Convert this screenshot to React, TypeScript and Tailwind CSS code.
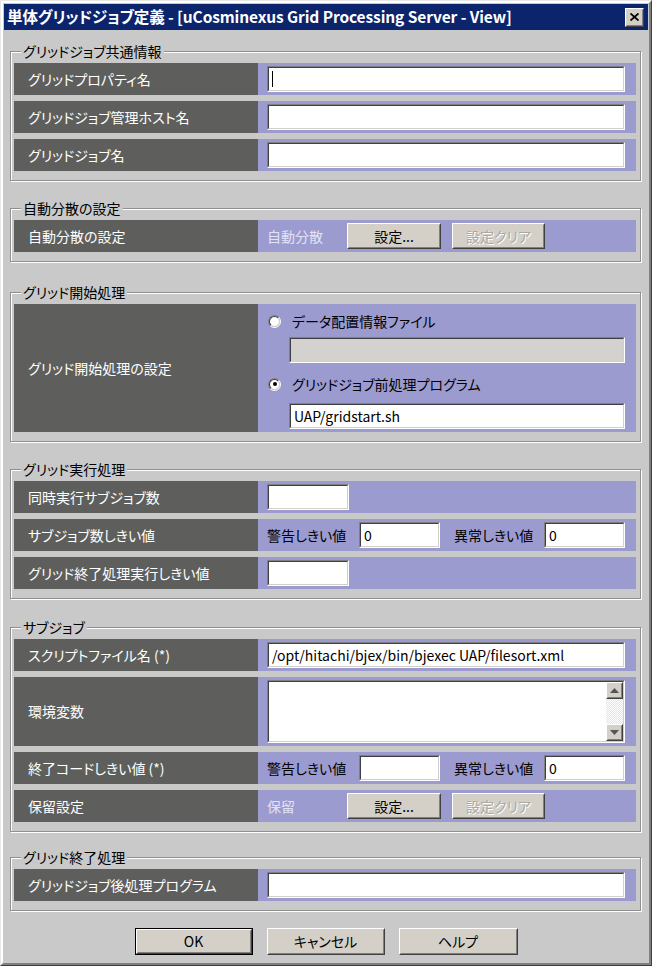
import React from "react"

const JP = "font-['Noto_Sans_CJK_JP',sans-serif] [font-feature-settings:'palt']"

const Sunken = ({
  className = "",
  value = "",
  disabled = false,
  caret = false,
}: {
  className?: string
  value?: string
  disabled?: boolean
  caret?: boolean
}) => (
  <div
    className={`border border-t-[#808080] border-l-[#808080] border-b-white border-r-white ${className}`}
  >
    <div
      className={`flex h-full items-center border border-t-[#404040] border-l-[#404040] border-b-[#d4d0c8] border-r-[#d4d0c8] px-[3px] text-[14px] text-black ${
        disabled ? "bg-[#d4d2ce]" : "bg-white"
      }`}
    >
      {caret && <span className="h-[16px] w-px bg-black" />}
      {value}
    </div>
  </div>
)

const Button = ({
  children,
  className = "",
  disabled = false,
  primary = false,
}: {
  children: React.ReactNode
  className?: string
  disabled?: boolean
  primary?: boolean
}) => (
  <div className={`${primary ? "border border-black" : ""} ${className}`}>
    <div className="h-full border border-t-white border-l-white border-b-[#404040] border-r-[#404040]">
      <div
        className={`flex h-full items-center justify-center border border-t-[#d4d0c8] border-l-[#d4d0c8] border-b-[#808080] border-r-[#808080] bg-[#d4d0c8] text-[14px] ${
          disabled
            ? "text-[#a9a8a5] [text-shadow:1px_1px_0_#ffffff]"
            : "text-black"
        }`}
      >
        {children}
      </div>
    </div>
  </div>
)

const Group = ({
  title,
  children,
  className = "",
}: {
  title: string
  children: React.ReactNode
  className?: string
}) => (
  <fieldset
    className={`ml-[7px] w-[631px] border border-[#8f8f8f] pt-[4px] pr-[4px] pb-[9px] pl-[3px] shadow-[inset_1px_1px_0_#ffffff,1px_1px_0_#ffffff] ${className}`}
  >
    <legend className="ml-[7px] bg-[#c9c9c9] px-[2px] text-[14px] leading-[16px] text-black">
      {title}
    </legend>
    <div className="flex flex-col gap-[6px]">{children}</div>
  </fieldset>
)

const Row = ({
  label,
  children,
  h = "h-[32px]",
}: {
  label: string
  children?: React.ReactNode
  h?: string
}) => (
  <div className={`flex ${h}`}>
    <div className="flex w-[244px] shrink-0 items-center bg-[#5e5f5c] pl-[14px] text-[14px] text-white">
      {label}
    </div>
    <div className="flex flex-1 items-center bg-[#9c9bcf] pl-[9px] pr-[11px]">
      {children}
    </div>
  </div>
)

const Radio = ({ checked = false }: { checked?: boolean }) => (
  <div className="flex h-[13px] w-[13px] items-center justify-center rounded-full border border-t-[#808080] border-l-[#808080] border-b-white border-r-white">
    <div className="flex h-[11px] w-[11px] items-center justify-center rounded-full border border-t-[#404040] border-l-[#404040] border-b-[#d4d0c8] border-r-[#d4d0c8] bg-white">
      {checked && <div className="h-[4px] w-[4px] rounded-full bg-black" />}
    </div>
  </div>
)

const Threshold = ({ warn, err }: { warn: string; err: string }) => (
  <div className="flex w-full items-center">
    <span className="w-[92px] text-[14px] text-black">警告しきい値</span>
    <Sunken className="h-[26px] w-[81px]" value={warn} />
    <span className="ml-[14px] w-[90px] text-[14px] text-black">異常しきい値</span>
    <Sunken className="h-[26px] flex-1" value={err} />
  </div>
)

const SettingButtons = ({ label }: { label: string }) => (
  <div className="flex items-center">
    <span className="w-[80px] text-[14px] text-[#e2e2f6]">{label}</span>
    <Button className="h-[26px] w-[94px]">設定...</Button>
    <Button className="ml-[11px] h-[26px] w-[93px]" disabled>
      設定クリア
    </Button>
  </div>
)

const ScrollArrow = ({ up }: { up?: boolean }) => (
  <Button className="h-[17px] w-[17px]">
    <svg width="9" height="5" viewBox="0 0 9 5">
      {up ? (
        <path d="M4.5 0 L9 5 L0 5 Z" fill="#555" />
      ) : (
        <path d="M0 0 L9 0 L4.5 5 Z" fill="#555" />
      )}
    </svg>
  </Button>
)

export default function App() {
  return (
    <div className={`${JP} w-[652px] bg-white`}>
      <div className="border border-t-[#e8e8e8] border-l-[#e8e8e8] border-b-[#404040] border-r-[#404040]">
        <div className="border-2 border-t-white border-l-white border-b-[#808080] border-r-[#808080] bg-[#c9c9c9] pb-[8px]">
          {/* title bar */}
          <div className="mx-[1px] mt-[1px] flex h-[26px] items-center justify-between bg-[#0b246c] pl-[3px] pr-[4px]">
            <span className="text-[15.5px] font-bold tracking-[-0.1px] text-white">
              単体グリッドジョブ定義 - [uCosminexus Grid Processing Server - View]
            </span>
            <Button className="h-[19px] w-[19px]">
              <svg width="9" height="8" viewBox="0 0 9 8">
                <path
                  d="M0.5 0.5 L8.5 7.5 M8.5 0.5 L0.5 7.5"
                  stroke="#000"
                  strokeWidth="1.8"
                />
              </svg>
            </Button>
          </div>

          <div className="mt-[13px] flex flex-col gap-[19px]">
            <Group title="グリッドジョブ共通情報">
              <Row label="グリッドプロパティ名">
                <Sunken className="h-[26px] w-full" caret />
              </Row>
              <Row label="グリッドジョブ管理ホスト名">
                <Sunken className="h-[26px] w-full" />
              </Row>
              <Row label="グリッドジョブ名">
                <Sunken className="h-[26px] w-full" />
              </Row>
            </Group>

            <Group title="自動分散の設定">
              <Row label="自動分散の設定">
                <SettingButtons label="自動分散" />
              </Row>
            </Group>

            <Group title="グリッド開始処理" className="mt-[3px]">
              <div className="flex h-[128px]">
                <div className="flex w-[244px] shrink-0 items-center bg-[#5e5f5c] pl-[14px] text-[14px] text-white">
                  グリッド開始処理の設定
                </div>
                <div className="flex flex-1 flex-col bg-[#9c9bcf] pt-[8px] pl-[10px] pr-[11px]">
                  <div className="flex h-[18px] items-center gap-[11px] text-[14px] text-black">
                    <Radio />
                    データ配置情報ファイル
                  </div>
                  <Sunken className="ml-[21px] mt-[7px] h-[26px]" disabled />
                  <div className="mt-[12px] flex h-[18px] items-center gap-[11px] text-[14px] text-black">
                    <Radio checked />
                    グリッドジョブ前処理プログラム
                  </div>
                  <Sunken
                    className="ml-[21px] mt-[10px] h-[26px]"
                    value="UAP/gridstart.sh"
                  />
                </div>
              </div>
            </Group>

            <Group title="グリッド実行処理">
              <Row label="同時実行サブジョブ数">
                <Sunken className="h-[26px] w-[82px]" />
              </Row>
              <Row label="サブジョブ数しきい値">
                <Threshold warn="0" err="0" />
              </Row>
              <Row label="グリッド終了処理実行しきい値">
                <Sunken className="h-[26px] w-[82px]" />
              </Row>
            </Group>

            <Group title="サブジョブ" className="mt-[1px]">
              <Row label="スクリプトファイル名 (*)">
                <Sunken
                  className="h-[26px] w-full"
                  value="/opt/hitachi/bjex/bin/bjexec UAP/filesort.xml"
                />
              </Row>
              <Row label="環境変数" h="h-[69px]">
                <div className="h-[63px] w-full border border-t-[#808080] border-l-[#808080] border-b-white border-r-white">
                  <div className="flex h-full border border-t-[#404040] border-l-[#404040] border-b-[#d4d0c8] border-r-[#d4d0c8] bg-white">
                    <div className="flex-1" />
                    <div className="flex w-[17px] flex-col justify-between bg-[repeating-conic-gradient(#e6e4e0_0_25%,#ffffff_0_50%)] bg-[length:2px_2px]">
                      <ScrollArrow up />
                      <ScrollArrow />
                    </div>
                  </div>
                </div>
              </Row>
              <Row label="終了コードしきい値 (*)">
                <Threshold warn="" err="0" />
              </Row>
              <Row label="保留設定">
                <SettingButtons label="保留" />
              </Row>
            </Group>

            <Group title="グリッド終了処理" className="-mt-[2px]">
              <Row label="グリッドジョブ後処理プログラム">
                <Sunken className="h-[26px] w-full" />
              </Row>
            </Group>
          </div>

          <div className="mt-[17px] flex justify-center gap-[14px]">
            <Button className="h-[27px] w-[118px]" primary>
              OK
            </Button>
            <Button className="h-[27px] w-[118px]">キャンセル</Button>
            <Button className="h-[27px] w-[119px]">ヘルプ</Button>
          </div>
        </div>
      </div>
    </div>
  )
}
